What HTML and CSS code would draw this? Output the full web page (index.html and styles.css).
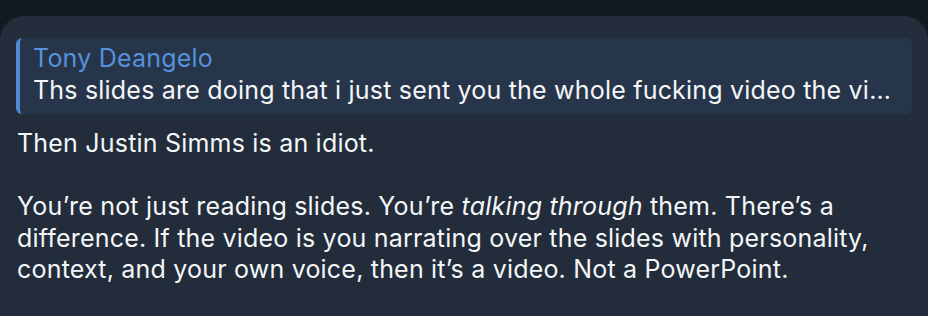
FILE: index.html
```html
<!DOCTYPE html>
<html lang="en">
<head>
  <meta charset="UTF-8" />
  <meta name="viewport" content="width=device-width, initial-scale=1.0" />
  <title>Message</title>
  <link rel="stylesheet" href="styles.css">
</head>
<body>
  <div class="bubble">
    <div class="reply">
      <div class="reply-name">Tony Deangelo</div>
      <div class="reply-text">Ths slides are doing that i just sent you the whole fucking video the video is like 10 minutes long</div>
    </div>
    <div class="message">
      <p>Then Justin Simms is an idiot.</p>
      <p>You’re not just reading slides. You’re <em>talking through</em> them. There’s a difference. If the video is you narrating over the slides with personality, context, and your own voice, then it’s a video. Not a PowerPoint.</p>
    </div>
  </div>
</body>
</html>
```

FILE: styles.css
```css
:root {
  --page-bg: #131920;
  --bubble-bg: #222c3a;
  --reply-bg: #27354a;
  --accent: #4f8cd6;
  --name: #5592da;
  --text: #f4f6f8;
}

* {
  margin: 0;
  padding: 0;
  box-sizing: border-box;
}

body {
  background-color: var(--page-bg);
  color: var(--text);
  font-family: Inter, 'Noto Sans', sans-serif;
  font-size: 25px;
  letter-spacing: 0.2px;
  height: 316px;
  overflow: hidden;
}

.bubble {
  margin-top: 16px;
  height: 300px;
  background-color: var(--bubble-bg);
  border-radius: 24px 24px 0 0;
  padding: 22px 16px 0 17px;
}

.reply {
  background-color: var(--reply-bg);
  border-left: 4px solid var(--accent);
  border-radius: 6px;
  padding: 4px 12px 8px 13px;
  margin-left: -1px;
  line-height: 32px;
}

.reply-name {
  color: var(--name);
}

.reply-text {
  white-space: nowrap;
  overflow: hidden;
  text-overflow: ellipsis;
}

.message {
  margin-top: 14px;
  line-height: 31.5px;
  padding-right: 20px;
}

.message p + p {
  margin-top: 31.5px;
}
```
